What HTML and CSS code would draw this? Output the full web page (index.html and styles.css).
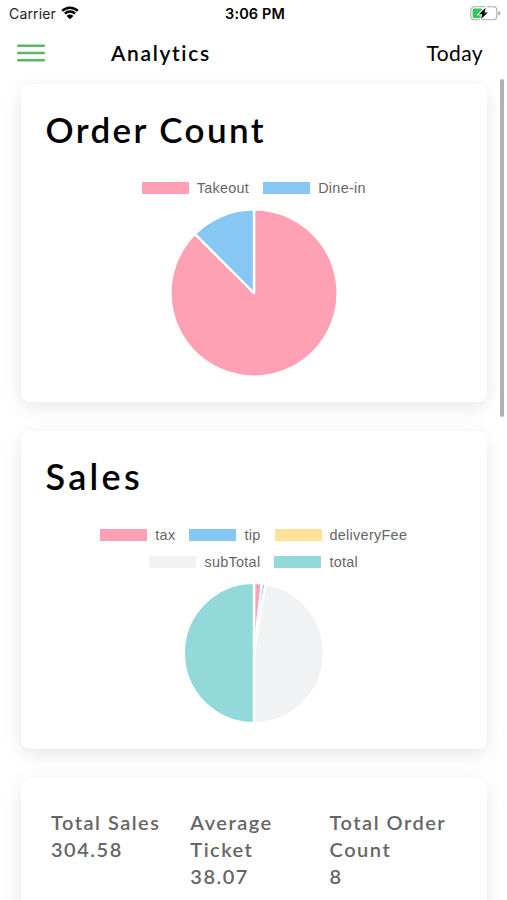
FILE: index.html
```
<!DOCTYPE html>
<html lang="en">
<head>
    <meta charset="UTF-8">
    <meta name="viewport" content="width=device-width, initial-scale=1.0">
    <title>Analytics</title>
    <link rel="stylesheet" href="styles.css">
</head>
<body>

    <div class="status-bar">
        <div class="carrier">
            <span>Carrier</span>
            <svg class="wifi" viewBox="0 0 18 14" width="18" height="14">
                <path d="M1.2 4.8A11.2 11.2 0 0 1 16.8 4.8M3.9 7.6A7.3 7.3 0 0 1 14.1 7.6" fill="none" stroke="#000" stroke-width="2.5"/>
                <path d="M9 13.3L5.6 9.9A4.8 4.8 0 0 1 12.4 9.9Z" fill="#000"/>
            </svg>
        </div>
        <div class="time">3:06 PM</div>
        <svg class="battery" viewBox="0 0 31 16" width="31" height="16">
            <rect x="0.8" y="0.8" width="26" height="13" rx="3.5" fill="none" stroke="#aaa" stroke-width="1.1"/>
            <rect x="2.6" y="2.5" width="10" height="9.6" rx="1.5" fill="#34c759"/>
            <path d="M28.2 5Q30.4 5.5 30.4 7.3T28.2 9.6Z" fill="#aaa"/>
            <path d="M15.7 1.7L8.9 8.2H12.2L11.1 13.1L17.8 6.5H14.5Z" fill="#000" stroke="#fff" stroke-width="2" paint-order="stroke"/>
        </svg>
    </div>

    <header>
        <button class="menu" aria-label="Menu">
            <svg viewBox="0 0 29 18" width="29" height="18">
                <path d="M1.2 1.8H26.8M1.2 9H26.8M1.2 16.2H26.8" stroke="#5cb565" stroke-width="2.5" stroke-linecap="round"/>
            </svg>
        </button>
        <h1>Analytics</h1>
        <div class="period">Today</div>
    </header>

    <main>
        <section class="card orders">
            <h2>Order Count</h2>
            <div class="legend">
                <div class="legend-row">
                    <span class="item takeout">Takeout</span>
                    <span class="item dine-in">Dine-in</span>
                </div>
            </div>
            <svg class="pie" viewBox="-84 -84 168 168" width="168" height="168">
                <path d="M0 0V-83.6A83.6 83.6 0 1 1 -59.1 -59.1Z" fill="#ffa1b5"/>
                <path d="M0 0L-59.1 -59.1A83.6 83.6 0 0 1 0 -83.6Z" fill="#86c7f3"/>
            </svg>
        </section>

        <section class="card sales">
            <h2>Sales</h2>
            <div class="legend">
                <div class="legend-row">
                    <span class="item tax">tax</span>
                    <span class="item tip">tip</span>
                    <span class="item delivery">deliveryFee</span>
                </div>
                <div class="legend-row">
                    <span class="item subtotal">subTotal</span>
                    <span class="item total">total</span>
                </div>
            </div>
            <svg class="pie" viewBox="-71 -71 142 142" width="142" height="142">
                <path d="M0 0V-70.2A70.2 70.2 0 0 1 7.9 -69.8Z" fill="#ffa1b5"/>
                <path d="M0 0L7.9 -69.8A70.2 70.2 0 0 1 11.6 -69.2Z" fill="#86c7f3"/>
                <path d="M0 0L11.6 -69.2A70.2 70.2 0 0 1 0 70.2Z" fill="#f1f2f4"/>
                <path d="M0 0V70.2A70.2 70.2 0 0 1 0 -70.2Z" fill="#93d9d9"/>
            </svg>
        </section>

        <section class="card summary">
            <div>Total Sales<br>304.58</div>
            <div>Average Ticket<br>38.07</div>
            <div>Total Order Count<br>8</div>
        </section>
        <div class="scrollbar"></div>
    </main>

</body>
</html>
```
FILE: styles.css
```
* {
    box-sizing: border-box;
}

body {
    font-family: Lato, 'Open Sans', sans-serif;
    margin: 0;
    height: 100vh;
    overflow: hidden;
    background-color: #fff;
    color: #000;
    display: flex;
    flex-direction: column;
}

.status-bar {
    display: grid;
    grid-template-columns: 1fr auto 1fr;
    align-items: center;
    height: 27px;
    padding: 0 6px 0 9px;
    font-family: Inter, sans-serif;
    font-size: 14px;
    flex-shrink: 0;
}

.carrier {
    display: flex;
    align-items: center;
    gap: 5px;
    letter-spacing: 0.15px;
    color: #222;
}

.wifi {
    margin-top: -2px;
}

.time {
    font-weight: 600;
    font-size: 14.5px;
    letter-spacing: 0.1px;
}

.battery {
    justify-self: end;
}

header {
    display: flex;
    align-items: center;
    height: 52px;
    padding: 0 24px 2px 17px;
    flex-shrink: 0;
}

.menu {
    width: 29px;
    height: 18px;
    margin-top: 2px;
    padding: 0;
    border: none;
    background: none;
}

.menu svg {
    display: block;
}

h1 {
    flex: 1;
    margin: 0 0 0 65px;
    font-size: 21px;
    font-weight: 600;
    letter-spacing: 1.65px;
}

.period {
    font-size: 21px;
    letter-spacing: 0.4px;
}

main {
    position: relative;
    flex: 1;
    min-height: 0;
    overflow: hidden;
    padding: 5px 20px 0 20.5px;
    display: flex;
    flex-direction: column;
    gap: 29.5px;
}

.card {
    flex-shrink: 0;
    height: 317.5px;
    padding: 23.5px 25px 25px;
    border-radius: 9px;
    background-color: #fff;
    box-shadow: 0 5px 19px rgba(0, 0, 0, 0.1);
    display: flex;
    flex-direction: column;
    align-items: center;
}

h2 {
    align-self: flex-start;
    margin: 0;
    font-size: 35px;
    line-height: 42px;
    font-weight: 600;
    letter-spacing: 2.4px;
}

.sales h2 {
    font-size: 36px;
    letter-spacing: 3.3px;
}

.legend {
    margin-top: 25px;
    font-family: 'Liberation Sans', Arial, sans-serif;
    font-size: 14.4px;
    letter-spacing: 0.3px;
    color: #666;
}

.legend-row {
    display: flex;
    justify-content: center;
    gap: 14px;
    height: 27px;
    line-height: 27px;
}

.item {
    display: flex;
    align-items: center;
    gap: 8px;
}

.item::before {
    content: '';
    width: 47px;
    height: 12px;
}

.takeout::before, .tax::before { background-color: #ffa1b5; }
.dine-in::before, .tip::before { background-color: #86c7f3; }
.delivery::before { background-color: #ffe29a; }
.subtotal::before { background-color: #f1f2f4; }
.total::before { background-color: #93d9d9; }

.pie {
    flex-shrink: 0;
    margin-top: 7px;
}

.sales .pie {
    margin-top: 6px;
}

.pie path {
    stroke: #fff;
    stroke-width: 2.4;
    stroke-linejoin: round;
}

.summary {
    display: grid;
    grid-template-columns: repeat(3, 139.3px);
    align-items: start;
    padding: 30.5px 0 0 30.5px;
    font-size: 20px;
    line-height: 27px;
    font-weight: 600;
    letter-spacing: 1.5px;
    color: #666;
}

.summary div {
    padding-right: 16px;
}

.scrollbar {
    position: absolute;
    top: 0;
    right: 3px;
    width: 4px;
    height: 338px;
    border-radius: 2px;
    background-color: #b1b1b1;
}
```
